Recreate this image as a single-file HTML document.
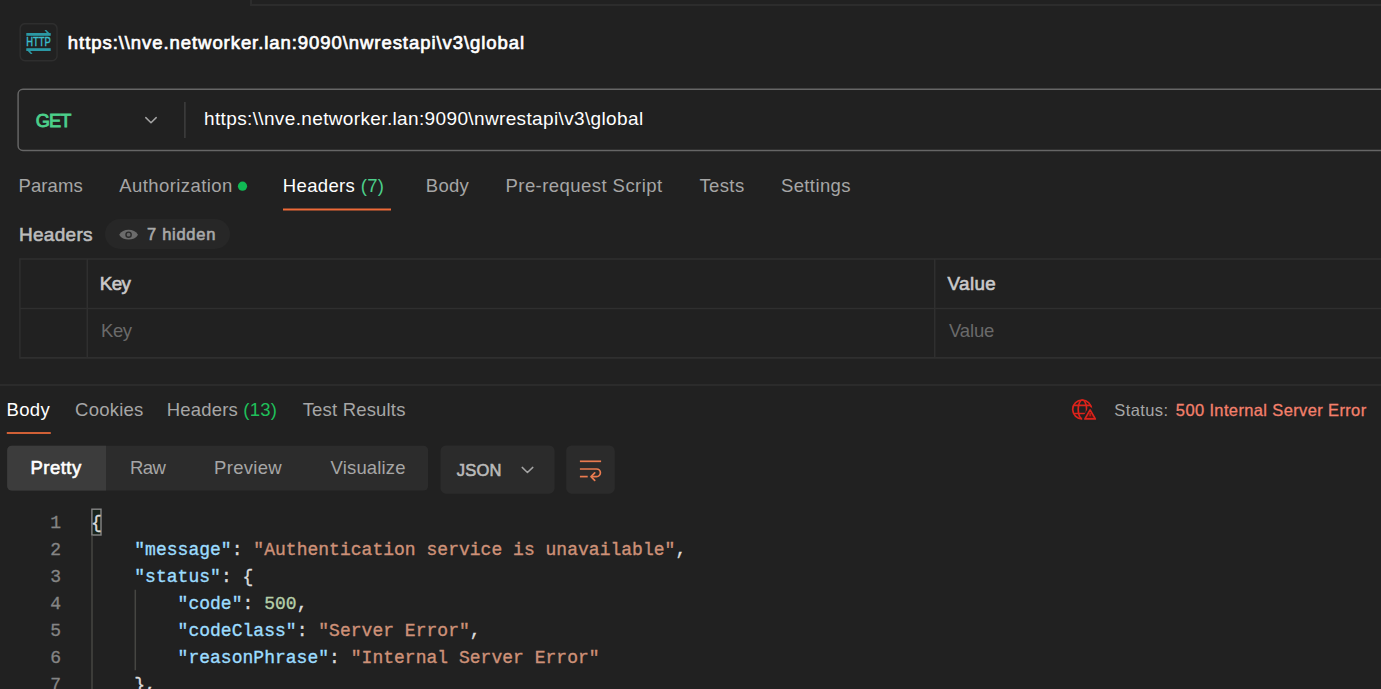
<!DOCTYPE html>
<html><head><meta charset="utf-8">
<style>
html,body{margin:0;padding:0;}
body{width:1381px;height:689px;overflow:hidden;background:#212121;font-family:"Liberation Sans",sans-serif;position:relative;color:#fff;}
.abs{position:absolute;white-space:nowrap;}
.t{position:absolute;white-space:nowrap;line-height:1;}
.code{position:absolute;white-space:pre;font-family:"Liberation Mono",monospace;font-size:18px;line-height:27px;left:91px;letter-spacing:0.02px;-webkit-text-stroke:0.35px currentColor;}
.ln{position:absolute;font-family:"Liberation Mono",monospace;font-size:18px;line-height:27px;color:#858585;-webkit-text-stroke:0.3px currentColor;width:61px;text-align:right;left:0;}
.k{color:#9cdcfe}.s{color:#ce9178}.n{color:#b5cea8}.p{color:#dcdcdc}
</style></head><body>
<!-- top stub lines -->
<div class="abs" style="left:250px;top:0;width:2px;height:6px;background:#2c2c2c"></div>
<div class="abs" style="left:252px;top:4px;width:1129px;height:2px;background:#2c2c2c"></div>

<!-- icon box -->
<svg class="abs" style="left:19px;top:23px" width="40" height="40" viewBox="0 0 40 40">
 <rect x="1.15" y="0.65" width="36.9" height="37.1" rx="5" fill="none" stroke="#2e2e2e" stroke-width="1.5"/>
 <g fill="#2b98a4">
  <rect x="7.3" y="10" width="24.4" height="2.8"/>
  <path d="M25.5 7 L27.3 7 L31.7 11.4 L29 11.4 Z"/>
  <rect x="7.3" y="25.2" width="24.4" height="2.8"/>
  <path d="M7.3 26.6 L10 26.6 L13.5 31 L11.7 31 Z"/>
 </g>
 <text x="7.3" y="23.4" font-family="Liberation Sans" font-size="12" fill="#3bbccb" stroke="#3bbccb" stroke-width="0.45" textLength="24.4" lengthAdjust="spacingAndGlyphs">HTTP</text>
</svg>

<!-- url bar -->
<svg class="abs" style="left:0;top:80px" width="1381" height="80" viewBox="0 80 1381 80"><rect x="18.1" y="89.3" width="1400" height="61.2" rx="4.8" fill="none" stroke="#666" stroke-width="1.45"/><path d="M184.85 102 V138" stroke="#3a3a3a" stroke-width="1.8"/></svg>
<svg class="abs" style="left:140px;top:110px" width="24" height="20" viewBox="140 110 24 20"><path d="M145.8 117.6 L151 122.8 L156.2 117.6" fill="none" stroke="#a4a4a4" stroke-width="1.5" stroke-linecap="round" stroke-linejoin="round"/></svg>

<!-- request tabs -->
<svg class="abs" style="left:232px;top:176px" width="20" height="20" viewBox="232 176 20 20"><circle cx="242.5" cy="186.2" r="4.6" fill="#10ba54"/></svg>
<svg class="abs" style="left:280px;top:204px" width="120" height="10" viewBox="280 204 120 10"><path d="M283 209.45 H391" stroke="#ee6a38" stroke-width="1.9"/></svg>

<!-- Headers pill -->
<div class="abs" style="left:105px;top:219px;width:125px;height:30px;border-radius:15px;background:#272727"></div>
<svg class="abs" style="left:118px;top:227px" width="22" height="16" viewBox="0 0 22 16"><path d="M1.2 7.7 C4.8 1.2 16.4 1.2 20 7.7 C16.4 14.2 4.8 14.2 1.2 7.7 Z" fill="#6b6b6b"/><circle cx="10.6" cy="7.7" r="3.3" fill="#2b2b2b"/><circle cx="10.6" cy="7.7" r="1.9" fill="#666"/></svg>

<!-- table -->
<svg class="abs" style="left:0;top:250px" width="1381" height="120" viewBox="0 250 1381 120">
 <g fill="none" stroke="#2f2f2f" stroke-width="1.5">
  <path d="M19.9 259 H1381 M19.9 308.4 H1381"/>
  <path d="M19.9 357.9 H1381" stroke-width="1.8"/>
  <path d="M19.9 258.3 V358.7 M87.25 259 V358 M934.75 259 V358"/>
 </g>
</svg>

<!-- separator -->
<div class="abs" style="left:0;top:384px;width:1381px;height:2px;background:#2b2b2b"></div>

<!-- response tabs -->
<svg class="abs" style="left:0px;top:428px" width="60" height="10" viewBox="0 428 60 10"><path d="M6.8 433 H50.8" stroke="#d06036" stroke-width="2.1"/></svg>

<!-- status -->
<svg class="abs" style="left:1066px;top:394px" width="36" height="32" viewBox="0 0 36 32">
 <g fill="none" stroke="#dc231b" stroke-width="1.7">
  <circle cx="16.1" cy="15.4" r="9.4"/>
  <ellipse cx="16.4" cy="15.4" rx="4.2" ry="9.4"/>
  <path d="M7.5 11.4 H24.7 M7.5 19.5 H24.7"/>
  <path d="M24.1 15.6 L29.6 25 H18.6 Z" stroke="#212121" stroke-width="5" fill="#212121" stroke-linejoin="round"/>
  <path d="M24.1 15.9 L29.3 24.9 H18.9 Z" stroke-linejoin="round" fill="#5a1512"/>
  <path d="M24.1 19 V22.2" stroke-width="1.2"/>
 </g>
</svg>

<!-- view buttons -->
<svg class="abs" style="left:0;top:440px" width="640" height="60" viewBox="0 440 640 60">
 <rect x="7.2" y="445.8" width="420.9" height="44.7" rx="4.5" fill="#2c2c2c"/>
 <path d="M106 445.8 H11.7 A4.5 4.5 0 0 0 7.2 450.3 V486 A4.5 4.5 0 0 0 11.7 490.5 H106 Z" fill="#3c3c3c"/>
 <rect x="440.5" y="445.4" width="114.1" height="48.3" rx="5.5" fill="#2b2b2b"/>
 <rect x="566.2" y="445.4" width="48.5" height="48.3" rx="5.5" fill="#2b2b2b"/>
</svg>
<svg class="abs" style="left:516px;top:460px" width="24" height="20" viewBox="516 460 24 20"><path d="M522.2 467.4 L527.45 472.5 L532.8 467.4" fill="none" stroke="#a4a4a4" stroke-width="1.5" stroke-linecap="round" stroke-linejoin="round"/></svg>
<svg class="abs" style="left:570px;top:452px" width="40" height="36" viewBox="570 452 40 36">
 <g fill="none" stroke="#ea7b50" stroke-width="1.7">
  <path d="M579.9 461.3 H601.1"/>
  <path d="M579.9 469 H596.6 A3.8 3.8 0 0 1 596.6 476.6 H591.4"/>
  <path d="M594.7 472.9 L591 476.6 L594.7 480.3" stroke-linecap="round" stroke-linejoin="round"/>
  <path d="M579.9 476.6 H587.7"/>
 </g>
</svg>

<div class="t" id="title" style="left:67.85px;top:34.20px;font-size:18.5px;font-weight:normal;-webkit-text-stroke:0.7px currentColor;color:#ffffff;letter-spacing:0.936px">https:\\nve.networker.lan:9090\nwrestapi\v3\global</div>
<div class="t" id="get" style="left:35.75px;top:112.30px;font-size:18.2px;font-weight:normal;-webkit-text-stroke:0.9px currentColor;color:#4ccf8b;letter-spacing:-0.889px">GET</div>
<div class="t" id="url" style="left:204.00px;top:108.60px;font-size:19px;font-weight:normal;color:#ffffff;letter-spacing:0.361px">https:\\nve.networker.lan:9090\nwrestapi\v3\global</div>
<div class="t" id="tp" style="left:18.60px;top:177.20px;font-size:18.5px;font-weight:normal;color:#a6a6a6;letter-spacing:0.062px">Params</div>
<div class="t" id="ta" style="left:119.30px;top:177.20px;font-size:18.5px;font-weight:normal;color:#a6a6a6;letter-spacing:0.417px">Authorization</div>
<div class="t" id="th" style="left:282.80px;top:177.20px;font-size:18.5px;font-weight:normal;color:#ffffff;letter-spacing:0.348px">Headers <span style='color:#4ccf8b'>(7)</span></div>
<div class="t" id="tb" style="left:425.80px;top:177.20px;font-size:18.5px;font-weight:normal;color:#a6a6a6;letter-spacing:0.261px">Body</div>
<div class="t" id="tpr" style="left:505.50px;top:177.20px;font-size:18.5px;font-weight:normal;color:#a6a6a6;letter-spacing:0.444px">Pre-request Script</div>
<div class="t" id="tt" style="left:699.40px;top:177.20px;font-size:18.5px;font-weight:normal;color:#a6a6a6;letter-spacing:0.393px">Tests</div>
<div class="t" id="ts" style="left:780.90px;top:177.20px;font-size:18.5px;font-weight:normal;color:#a6a6a6;letter-spacing:0.401px">Settings</div>
<div class="t" id="hl" style="left:18.90px;top:225.20px;font-size:19px;font-weight:normal;-webkit-text-stroke:0.6px currentColor;color:#bcbcbc;letter-spacing:0.314px">Headers</div>
<div class="t" id="hid" style="left:146.90px;top:226.30px;font-size:16.5px;font-weight:normal;-webkit-text-stroke:0.6px currentColor;color:#a9a9a9;letter-spacing:0.738px">7 hidden</div>
<div class="t" id="k1" style="left:99.80px;top:274.70px;font-size:18.8px;font-weight:normal;-webkit-text-stroke:0.6px currentColor;color:#cacaca;letter-spacing:-0.586px">Key</div>
<div class="t" id="v1" style="left:947.50px;top:274.70px;font-size:18.8px;font-weight:normal;-webkit-text-stroke:0.6px currentColor;color:#cacaca;letter-spacing:0.401px">Value</div>
<div class="t" id="k2" style="left:101.00px;top:322.10px;font-size:18.5px;font-weight:normal;color:#6a6a6a;letter-spacing:-0.464px">Key</div>
<div class="t" id="v2" style="left:949.00px;top:322.10px;font-size:18.5px;font-weight:normal;color:#6a6a6a;letter-spacing:-0.139px">Value</div>
<div class="t" id="rb" style="left:6.60px;top:401.00px;font-size:18.5px;font-weight:normal;color:#ffffff;letter-spacing:0.294px">Body</div>
<div class="t" id="rc" style="left:75.10px;top:401.00px;font-size:18.5px;font-weight:normal;color:#a6a6a6;letter-spacing:0.219px">Cookies</div>
<div class="t" id="rh" style="left:166.70px;top:401.00px;font-size:18.5px;font-weight:normal;color:#a6a6a6;letter-spacing:0.200px">Headers <span style='color:#1fbf5a'>(13)</span></div>
<div class="t" id="rt" style="left:302.70px;top:401.00px;font-size:18.5px;font-weight:normal;color:#a6a6a6;letter-spacing:0.181px">Test Results</div>
<div class="t" id="st1" style="left:1114.30px;top:402.00px;font-size:16.5px;font-weight:normal;color:#a6a6a6;letter-spacing:0.387px">Status:</div>
<div class="t" id="st2" style="left:1175.85px;top:402.00px;font-size:16.5px;font-weight:normal;-webkit-text-stroke:0.3px currentColor;color:#f4806c;letter-spacing:0.363px">500 Internal Server Error</div>
<div class="t" id="b1" style="left:30.50px;top:459.20px;font-size:18.5px;font-weight:normal;-webkit-text-stroke:0.6px currentColor;color:#ffffff;letter-spacing:0.466px">Pretty</div>
<div class="t" id="b2" style="left:130.00px;top:459.20px;font-size:18.5px;font-weight:normal;color:#a6a6a6;letter-spacing:-0.524px">Raw</div>
<div class="t" id="b3" style="left:214.10px;top:459.20px;font-size:18.5px;font-weight:normal;color:#a6a6a6;letter-spacing:0.277px">Preview</div>
<div class="t" id="b4" style="left:330.60px;top:459.20px;font-size:18.5px;font-weight:normal;color:#a6a6a6;letter-spacing:0.148px">Visualize</div>
<div class="t" id="js" style="left:456.70px;top:461.90px;font-size:16.5px;font-weight:normal;-webkit-text-stroke:0.6px currentColor;color:#bababa;letter-spacing:0.237px">JSON</div>

<!-- code -->
<div class="ln" style="top:510px">1<br>2<br>3<br>4<br>5<br>6<br>7</div>
<svg class="abs" style="left:85px;top:500px" width="30" height="40" viewBox="85 500 30 40"><rect x="91.9" y="509.2" width="9.1" height="25.8" fill="#19241b" stroke="#868686" stroke-width="1.4"/></svg>
<svg class="abs" style="left:85px;top:530px" width="60" height="159" viewBox="85 530 60 159"><path d="M92 535.8 V689 M135.3 589.8 V670.2" stroke="#464642" stroke-width="1.5"/></svg>
<div class="code" id="code" style="top:510px"><span class="p">{</span>
    <span class="k">"message"</span><span class="p">: </span><span class="s">"Authentication service is unavailable"</span><span class="p">,</span>
    <span class="k">"status"</span><span class="p">: {</span>
        <span class="k">"code"</span><span class="p">: </span><span class="n">500</span><span class="p">,</span>
        <span class="k">"codeClass"</span><span class="p">: </span><span class="s">"Server Error"</span><span class="p">,</span>
        <span class="k">"reasonPhrase"</span><span class="p">: </span><span class="s">"Internal Server Error"</span>
    <span class="p">},</span></div>
</body></html>
